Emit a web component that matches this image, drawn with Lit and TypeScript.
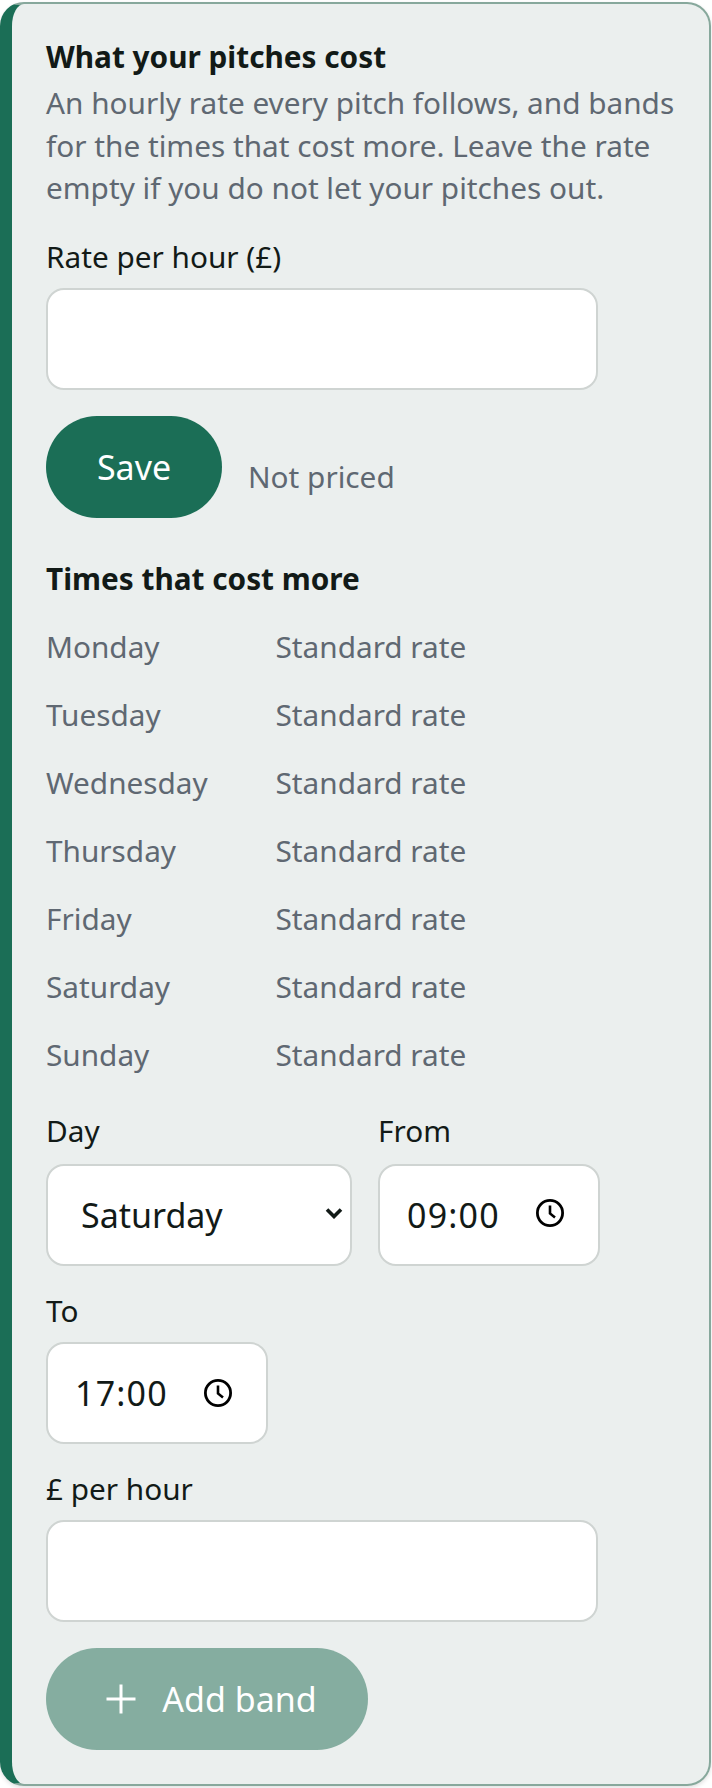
import { LitElement, html, css, svg } from "lit";
import { customElement } from "lit/decorators.js";

const DAYS = ["Monday", "Tuesday", "Wednesday", "Thursday", "Friday", "Saturday", "Sunday"];

const clock = html`<svg class="clock" viewBox="0 0 30 30" width="30" height="30" aria-hidden="true">
  ${svg`<circle cx="15" cy="15" r="12.6" fill="none" stroke="#000" stroke-width="2.8"></circle>
  <path d="M15 7.5V15.5L20 19.5" fill="none" stroke="#000" stroke-width="2.6"></path>`}
</svg>`;

@customElement("app-root")
export class AppRoot extends LitElement {
  static styles = css`
    :host {
      display: block;
      background: #fff;
      padding-top: 2px;
      padding-bottom: 2px;
      padding-right: 1px;
      font-family: "Noto Sans", "Open Sans", sans-serif;
      font-size: 29.75px;
      color: #121a17;
    }
    .card {
      box-sizing: border-box;
      height: 1784px;
      background: #ebefee;
      border: 2px solid #87a89c;
      border-left: 12px solid #1b6e56;
      border-radius: 24px;
      box-shadow: 0 2px 4px rgba(0, 0, 0, 0.12);
      padding: 32px 24px 0 34px;
    }
    .title,
    .sub {
      font-size: inherit;
      font-weight: 700;
      line-height: 42px;
      margin: 0;
      color: #121a17;
    }
    .title {
      margin-bottom: 4px;
    }
    .intro {
      margin: 0;
      color: #5f6872;
      line-height: 42.5px;
    }
    .label {
      line-height: 40px;
      color: #121a17;
    }
    .field {
      box-sizing: border-box;
      background: #fff;
      border: 2px solid #cfd4d2;
      border-radius: 18px;
      height: 102px;
      display: flex;
      align-items: center;
      font-size: 34px;
      color: #121a17;
    }
    .wide {
      width: 552px;
    }
    .rate-label {
      margin-top: 27px;
    }
    .save-row {
      display: flex;
      align-items: center;
      gap: 26px;
      margin-top: 26px;
    }
    .btn {
      display: inline-flex;
      align-items: center;
      justify-content: center;
      height: 102px;
      border-radius: 51px;
      color: #fff;
      font-size: 34px;
    }
    .save {
      width: 176px;
      background: #1b6e56;
    }
    .status {
      color: #5f6872;
      margin-top: 20px;
    }
    .sub {
      margin-top: 40px;
    }
    .days {
      margin-top: 13px;
      display: grid;
      grid-template-columns: 229.5px 1fr;
      grid-auto-rows: 68px;
      align-items: center;
      color: #5f6872;
    }
    .band-row {
      display: flex;
      gap: 26px;
      margin-top: 22px;
    }
    .select {
      width: 306px;
      margin-top: 13px;
      padding-left: 33px;
      padding-right: 7px;
      justify-content: space-between;
    }
    .chevron {
      flex: none;
      display: block;
      margin-bottom: 4px;
    }
    .time {
      width: 222px;
      padding: 0 33px 0 27px;
      justify-content: space-between;
      letter-spacing: 1.2px;
    }
    .band-row .time {
      margin-top: 13px;
    }
    .band-row .clock {
      margin-bottom: 4px;
    }
    .to {
      margin-top: 25px;
    }
    .gap-input {
      margin-top: 11px;
    }
    .add {
      box-sizing: border-box;
      width: 322px;
      margin-top: 26px;
      padding-left: 9px;
      background: #85ada0;
      gap: 26px;
    }
    .clock,
    .plus {
      flex: none;
      display: block;
    }
  `;

  render() {
    return html`
      <section class="card">
        <h2 class="title">What your pitches cost</h2>
        <p class="intro">
          An hourly rate every pitch follows, and bands for the times that cost more. Leave the rate
          empty if you do not let your pitches out.
        </p>
        <div class="label rate-label">Rate per hour (£)</div>
        <div class="field wide gap-input"></div>
        <div class="save-row">
          <div class="btn save">Save</div>
          <div class="status">Not priced</div>
        </div>
        <h3 class="sub">Times that cost more</h3>
        <div class="days">
          ${DAYS.map((d) => html`<div>${d}</div><div>Standard rate</div>`)}
        </div>
        <div class="band-row">
          <div>
            <div class="label">Day</div>
            <div class="field select">
              <span>Saturday</span>
              <svg class="chevron" viewBox="0 0 18 12" width="18" height="12" aria-hidden="true">
                ${svg`<path d="M2 2.5L9 9.5L16 2.5" fill="none" stroke="#121a17" stroke-width="3.6"></path>`}
              </svg>
            </div>
          </div>
          <div>
            <div class="label">From</div>
            <div class="field time"><span>09:00</span>${clock}</div>
          </div>
        </div>
        <div class="label to">To</div>
        <div class="field time gap-input"><span>17:00</span>${clock}</div>
        <div class="label to">£ per hour</div>
        <div class="field wide gap-input"></div>
        <div class="btn add">
          <svg class="plus" viewBox="0 0 30 30" width="30" height="30" aria-hidden="true">
            ${svg`<path d="M15 0.5V29.5M0.5 15H29.5" fill="none" stroke="#fff" stroke-width="3"></path>`}
          </svg>
          <span>Add band</span>
        </div>
      </section>
    `;
  }
}
